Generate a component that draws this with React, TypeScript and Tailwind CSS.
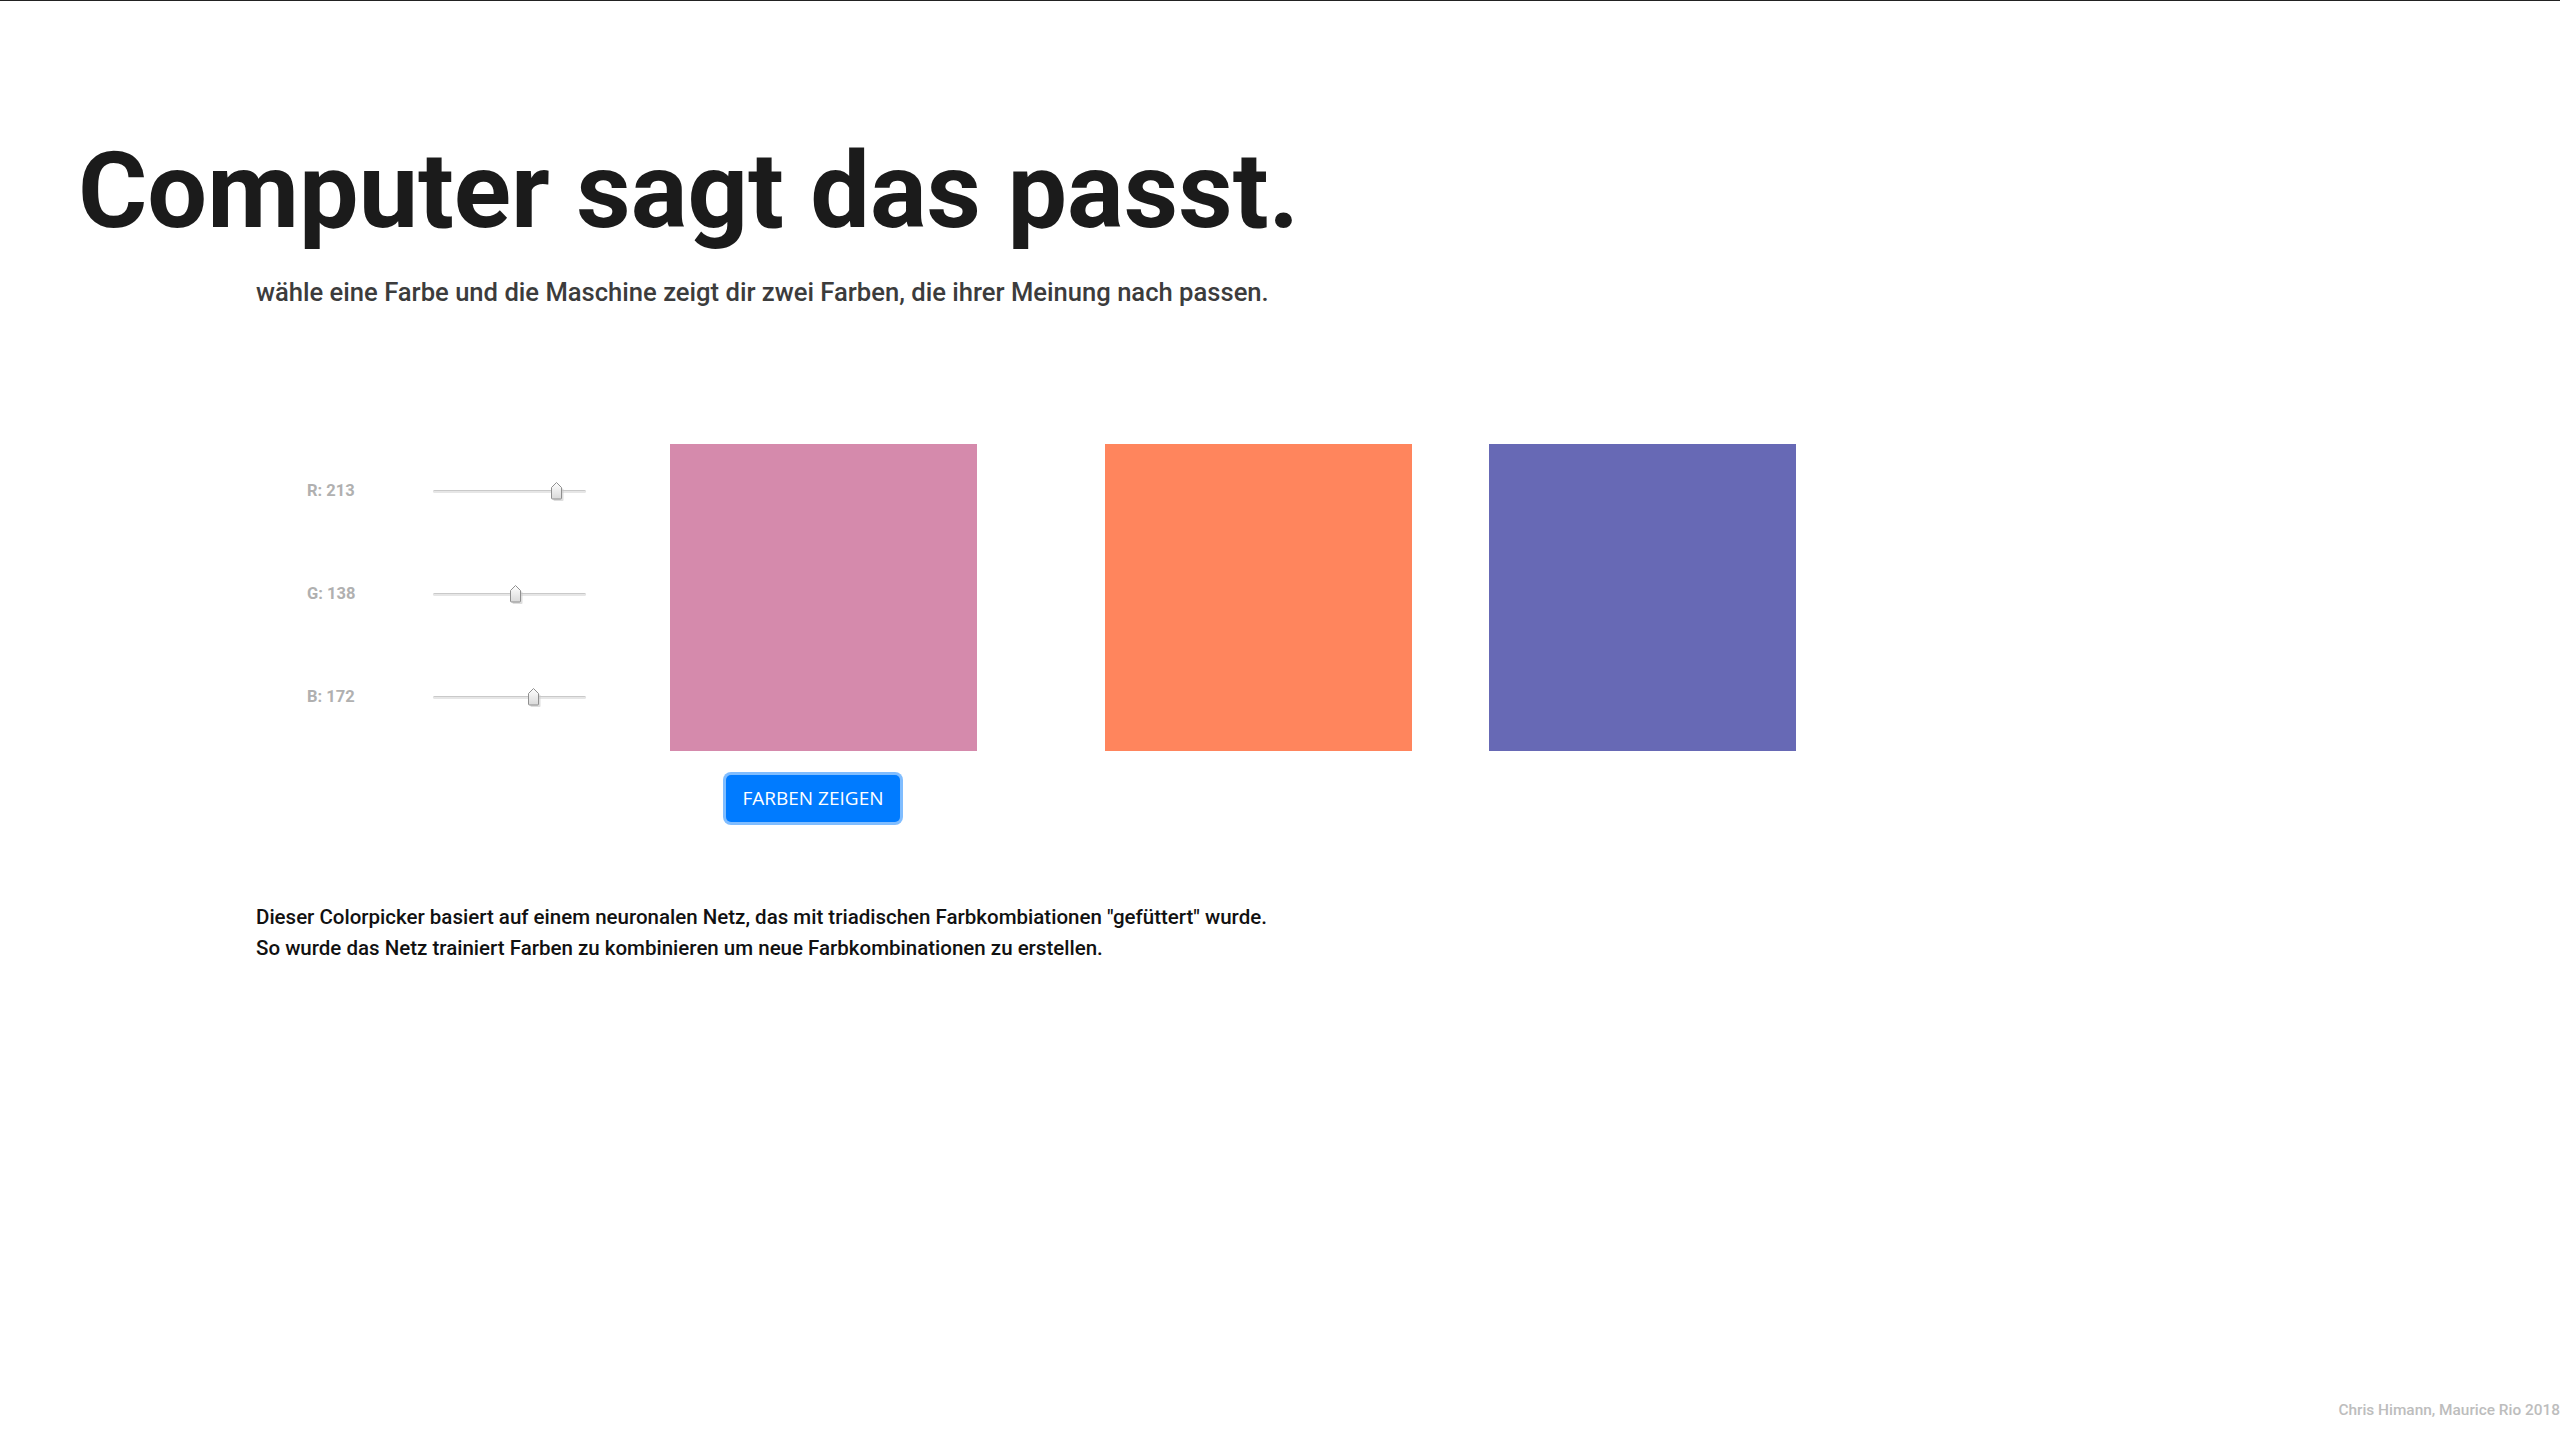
import React from 'react';

const channels = [
  { label: 'R', value: 213 },
  { label: 'G', value: 138 },
  { label: 'B', value: 172 },
];

function Thumb() {
  return (
    <svg width="15" height="20" viewBox="0 0 15 20" className="block">
      <defs>
        <linearGradient id="thumbFill" x1="0" y1="0" x2="0" y2="1">
          <stop offset="0" stopColor="#ffffff" />
          <stop offset="1" stopColor="#d9d9d9" />
        </linearGradient>
      </defs>
      <path d="M2.5 7.5 L7.5 2.5 L12.5 7.5 L12.5 18 Q12.5 19 11.5 19 L3.5 19 Q2.5 19 2.5 18 Z" fill="#c8c8c8" opacity="0.6" transform="translate(1 1)" />
      <path d="M1.5 6.5 L6.5 1.5 L11.5 6.5 L11.5 17 Q11.5 18 10.5 18 L2.5 18 Q1.5 18 1.5 17 Z" fill="url(#thumbFill)" stroke="#8f8f8f" strokeWidth="1" />
    </svg>
  );
}

function Slider({ value }: { value: number }) {
  const pct = value / 255;
  return (
    <div className="relative w-[153px] h-[20px]">
      <div className="absolute left-0 right-0 top-[9px] h-[3px] rounded-full bg-[#e6e6e6] border-t border-[#c9c9c9]" />
      <div className="absolute top-[0px]" style={{ left: `${pct * 140}px` }}>
        <Thumb />
      </div>
    </div>
  );
}

export default function App() {
  return (
    <div className="min-h-screen h-[1440px] flex flex-col bg-white border-t border-[#222]" style={{ fontFamily: 'Roboto, "Liberation Sans", sans-serif' }}>
      <h1 className="mt-[127px] ml-[78px] text-[106px] leading-[1.2] font-bold text-[#1b1b1b]">
        Computer sagt das passt.
      </h1>

      <div className="pl-[256px]">
        <p className="mt-[19px] text-[25.6px] leading-[36px] font-medium text-[#3c3c3c]">
          wähle eine Farbe und die Maschine zeigt dir zwei Farben, die ihrer Meinung nach passen.
        </p>

        <div className="mt-[134px] flex items-start">
          <div className="flex flex-col pl-[51px] pt-[27px] gap-[63px] w-[414px]">
            {channels.map((c) => (
              <div key={c.label} className="flex items-center h-[40px]">
                <span className="w-[126px] text-[16.5px] font-bold text-[#b0b0b0]">
                  {c.label}: {c.value}
                </span>
                <Slider value={c.value} />
              </div>
            ))}
          </div>

          <div className="flex flex-col">
            <div className="w-[307px] h-[307px] bg-[#d58aac]" />
            <button className="mt-[24px] ml-[56px] w-[174px] h-[47px] rounded-[5px] bg-[#007bff] text-white text-[19px] ring-[3px] ring-[#80bdff] uppercase" style={{ fontFamily: '"Open Sans", "Noto Sans", sans-serif' }}>
              Farben zeigen
            </button>
          </div>

          <div className="ml-[128px] w-[307px] h-[307px] bg-[#ff855d]" />
          <div className="ml-[77px] w-[307px] h-[307px] bg-[#6769b5]" />
        </div>

        <div className="mt-[80px] text-[20.5px] leading-[31px] font-medium text-[#111]">
          <p>Dieser Colorpicker basiert auf einem neuronalen Netz, das mit triadischen Farbkombiationen "gefüttert" wurde.</p>
          <p>So wurde das Netz trainiert Farben zu kombinieren um neue Farbkombinationen zu erstellen.</p>
        </div>
      </div>

      <footer className="mt-auto pb-[20px] text-right text-[15.4px] leading-[20px] font-medium text-[#bdbdbd]">
        Chris Himann, Maurice Rio 2018
      </footer>
    </div>
  );
}
